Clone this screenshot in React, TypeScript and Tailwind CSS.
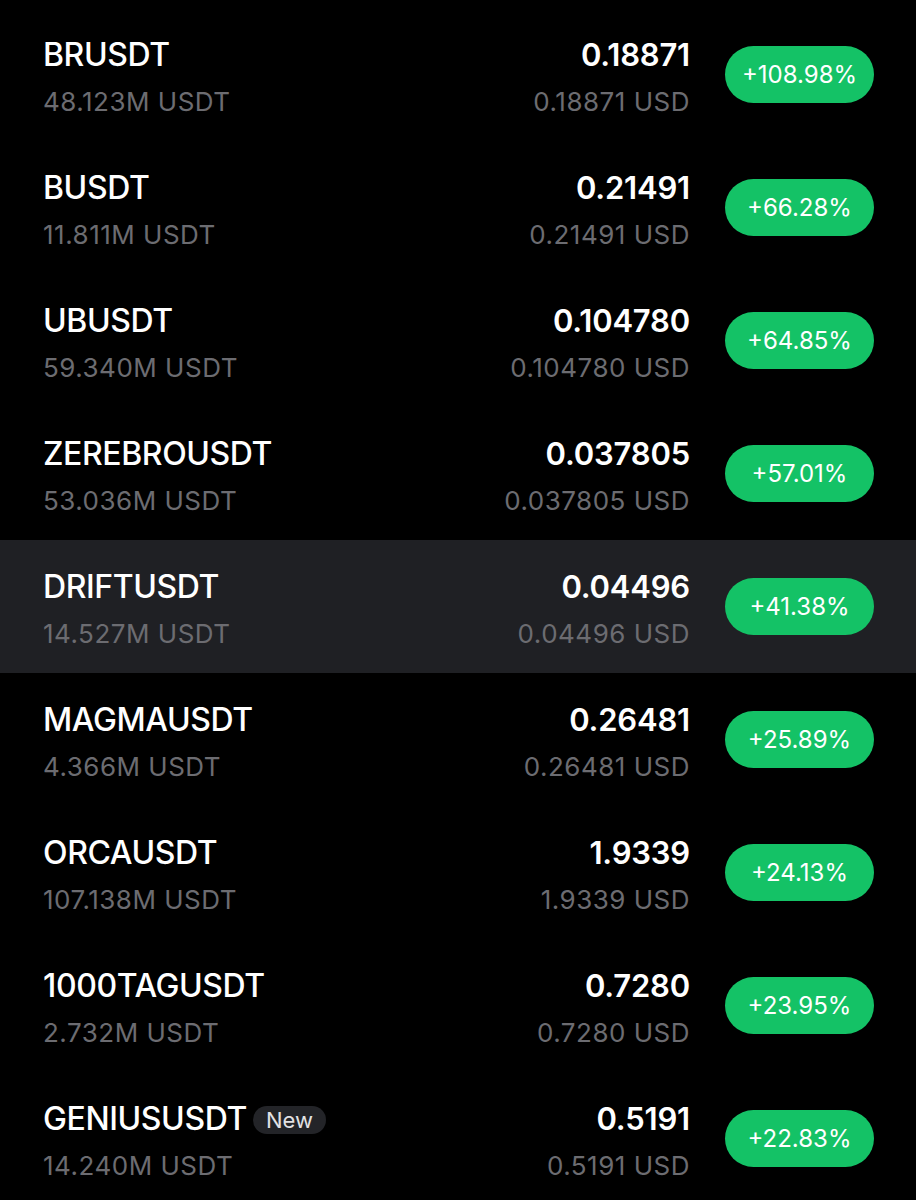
type Ticker = {
  symbol: string;
  volume: string;
  price: string;
  change: string;
  isNew?: boolean;
  active?: boolean;
};

const tickers: Ticker[] = [
  { symbol: 'BRUSDT', volume: '48.123M USDT', price: '0.18871', change: '+108.98%' },
  { symbol: 'BUSDT', volume: '11.811M USDT', price: '0.21491', change: '+66.28%' },
  { symbol: 'UBUSDT', volume: '59.340M USDT', price: '0.104780', change: '+64.85%' },
  { symbol: 'ZEREBROUSDT', volume: '53.036M USDT', price: '0.037805', change: '+57.01%' },
  { symbol: 'DRIFTUSDT', volume: '14.527M USDT', price: '0.04496', change: '+41.38%', active: true },
  { symbol: 'MAGMAUSDT', volume: '4.366M USDT', price: '0.26481', change: '+25.89%' },
  { symbol: 'ORCAUSDT', volume: '107.138M USDT', price: '1.9339', change: '+24.13%' },
  { symbol: '1000TAGUSDT', volume: '2.732M USDT', price: '0.7280', change: '+23.95%' },
  { symbol: 'GENIUSUSDT', volume: '14.240M USDT', price: '0.5191', change: '+22.83%', isNew: true },
];

function TickerRow({ t }: { t: Ticker }) {
  return (
    <div
      className={
        'flex h-[133px] items-center pl-[43px] pr-[42px] ' + (t.active ? 'bg-[#1f2024]' : 'bg-black')
      }
    >
      <div className="flex flex-1 flex-col pt-[3px]">
        <div className="flex items-center gap-[6px]">
          <span className="text-[32px] font-medium leading-[40px] tracking-[-0.4px] text-white">{t.symbol}</span>
          {t.isNew && (
            <span className="mt-[2px] rounded-full bg-[#232428] px-[13px] text-[22px] leading-[28px] text-[#e2e2e4]">
              New
            </span>
          )}
        </div>
        <span className="mt-[11px] text-[26px] leading-[32px] tracking-[0.5px] text-[#6c6c71]">{t.volume}</span>
      </div>
      <div className="flex flex-col items-end pt-[3px]">
        <span className="text-[31px] font-semibold leading-[40px] tracking-[-0.2px] text-white">{t.price}</span>
        <span className="mt-[11px] text-[26px] leading-[32px] tracking-[0.5px] text-[#6c6c71]">{t.price} USD</span>
      </div>
      <div className="ml-[35px] flex h-[57px] w-[149px] items-center justify-center rounded-full bg-[#14c266] text-[24px] text-white">
        {t.change}
      </div>
    </div>
  );
}

export default function App() {
  return (
    <div className="min-h-[1200px] bg-black pt-2 font-['Inter',sans-serif]">
      {tickers.map((t) => (
        <TickerRow key={t.symbol} t={t} />
      ))}
    </div>
  );
}
